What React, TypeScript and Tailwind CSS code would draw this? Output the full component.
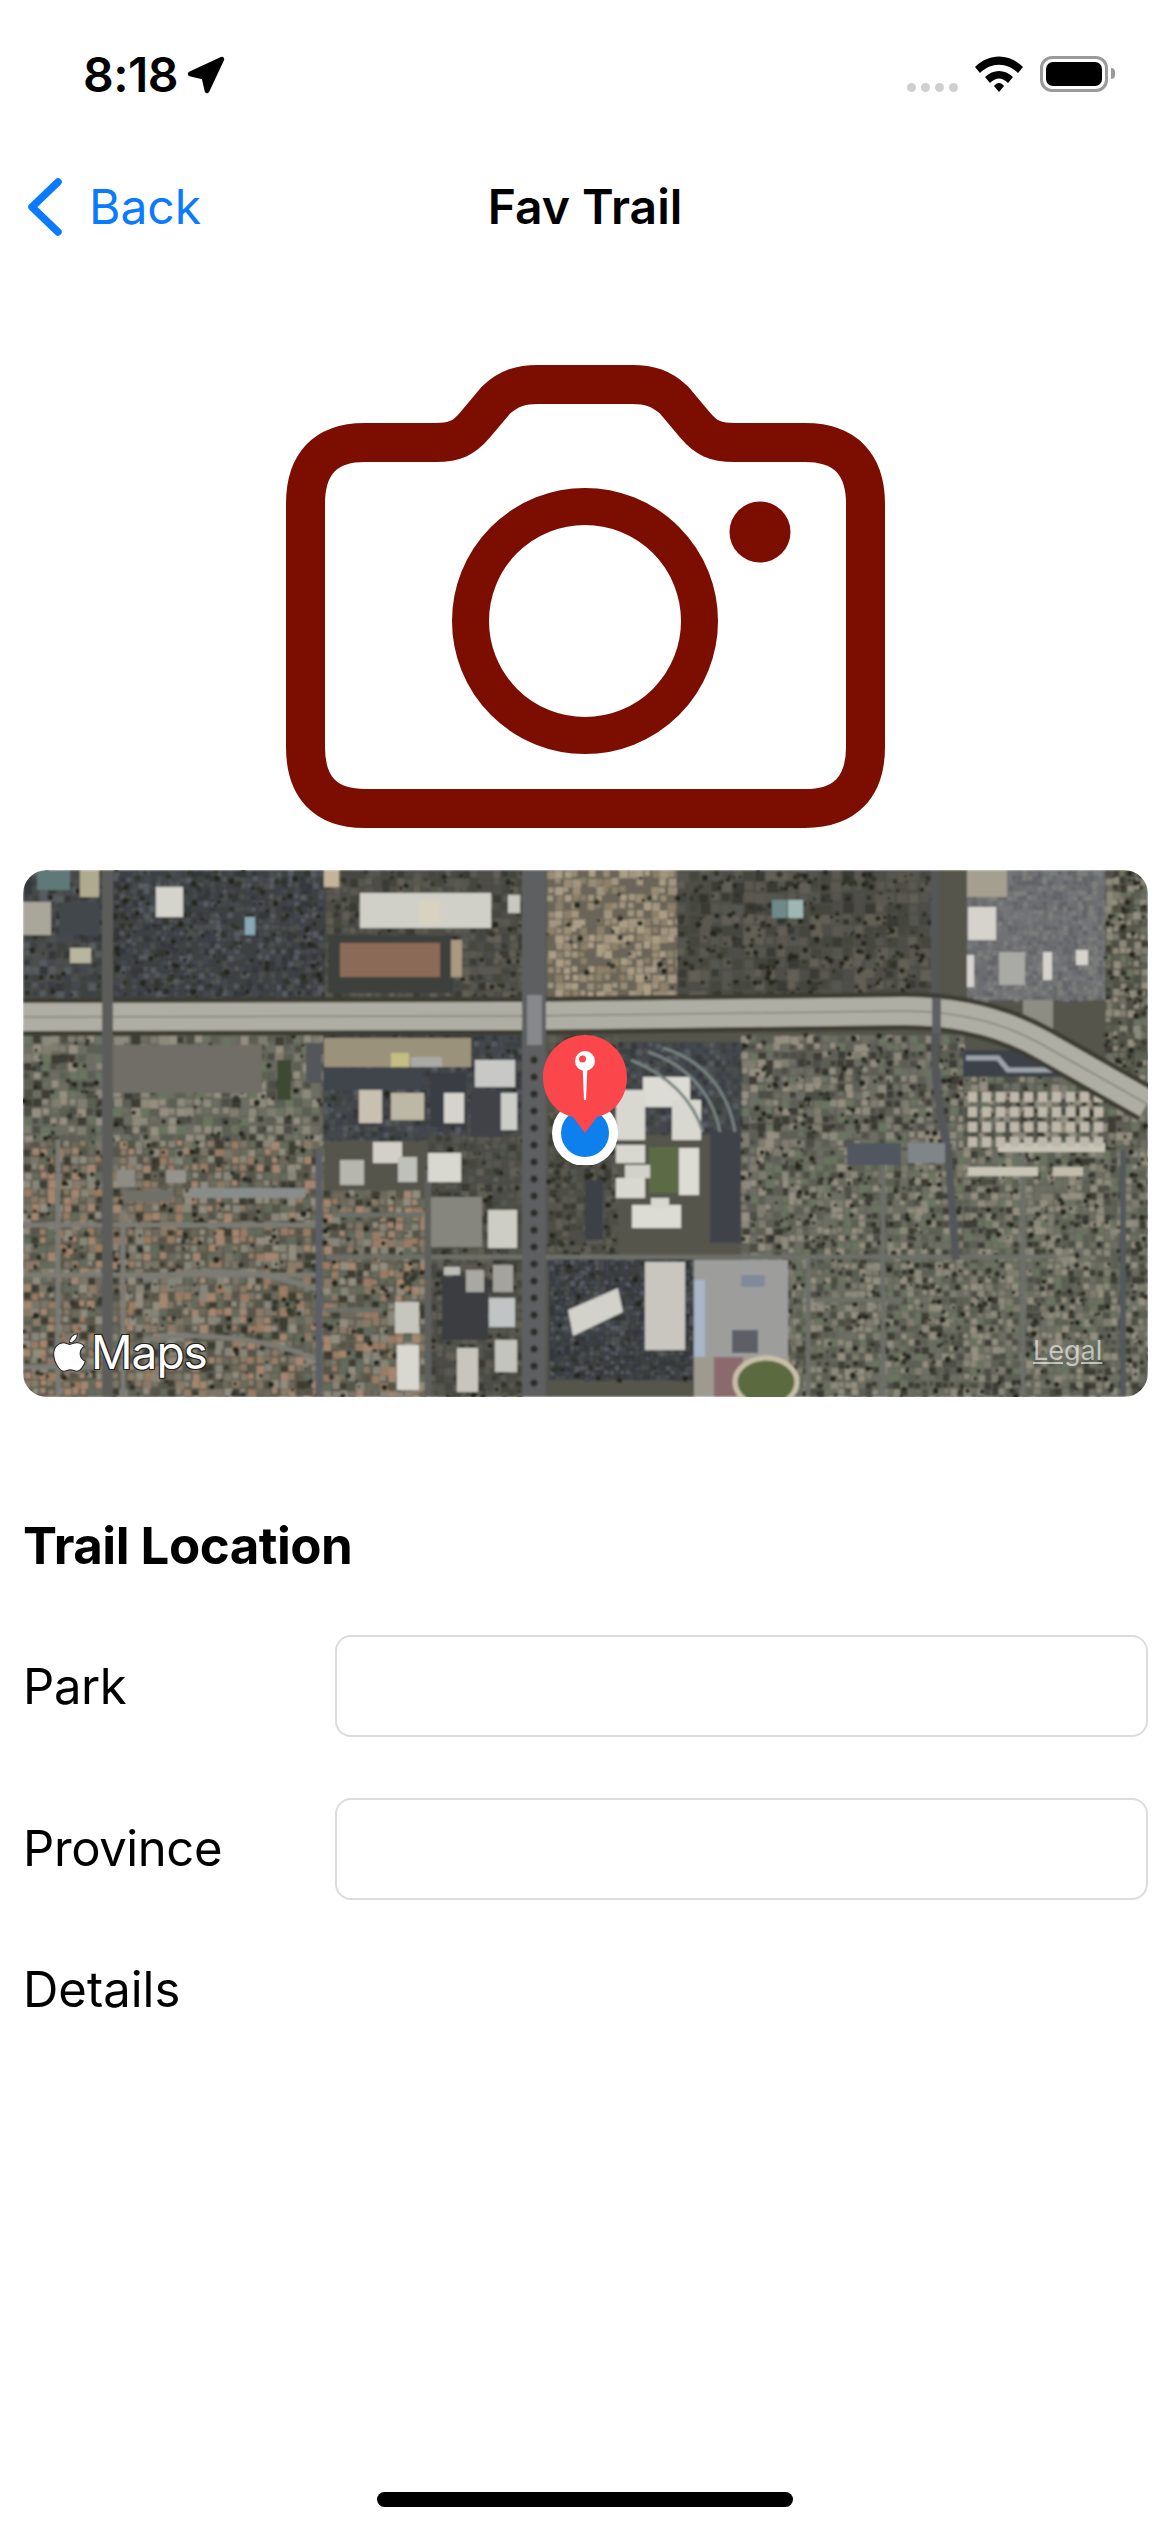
import { FaApple } from "react-icons/fa";

const font = "font-['Inter','Liberation_Sans',sans-serif]";

type Area = { x: number; y: number; w: number; h: number; cell: number; base: string; colors: string[]; trees?: number };
type Box = [number, number, number, number, string];

const warm = ["#8b7a68", "#9a7c64", "#6d6a5c", "#3c3d32", "#7b7668", "#928d7e", "#55544a", "#a58670", "#646c5c", "#888679"];
const mixed = ["#6d6e64", "#7f7d70", "#3c3e34", "#8c8a7c", "#5b5e52", "#948f80", "#4d5046", "#6b7460"];
const darkLot = ["#3e4146", "#44484e", "#34373a", "#4c504d", "#3e433f", "#565b60"];
const grayRoof = ["#5a5950", "#4f4e47", "#3a3b34", "#625f55", "#555650", "#45463e"];
const tan = ["#a39680", "#ab9e86", "#8c8069", "#998d76", "#6a6558"];

const areas: Area[] = [
  { x: 0, y: 270, w: 300, h: 257, cell: 8, base: "#5d5c50", colors: warm, trees: 300 },
  { x: 300, y: 320, w: 105, h: 207, cell: 8, base: "#5d5c50", colors: warm, trees: 320 },
  { x: 0, y: 165, w: 300, h: 105, cell: 9, base: "#66665c", colors: mixed, trees: 320 },
  { x: 0, y: 0, w: 80, h: 130, cell: 8, base: "#4a4b48", colors: darkLot, trees: 260 },
  { x: 90, y: 0, w: 212, h: 128, cell: 6, base: "#3d4044", colors: darkLot, trees: 140 },
  { x: 302, y: 0, w: 200, h: 128, cell: 8, base: "#484a46", colors: grayRoof, trees: 260 },
  { x: 524, y: 0, w: 130, h: 128, cell: 8, base: "#6b6558", colors: tan, trees: 600 },
  { x: 654, y: 0, w: 256, h: 128, cell: 11, base: "#4e4e47", colors: grayRoof, trees: 130 },
  { x: 944, y: 0, w: 138, h: 130, cell: 5, base: "#6f7072", colors: ["#75767a", "#6b6d70", "#7f807c", "#626467"] },
  { x: 1082, y: 0, w: 42, h: 215, cell: 7, base: "#565448", colors: mixed, trees: 130 },
  { x: 718, y: 165, w: 222, h: 225, cell: 8, base: "#62615a", colors: mixed, trees: 220 },
  { x: 940, y: 205, w: 184, h: 100, cell: 8, base: "#5d5d54", colors: mixed, trees: 300 },
  { x: 765, y: 280, w: 359, h: 247, cell: 7, base: "#66675c", colors: mixed, trees: 230 },
  { x: 718, y: 385, w: 50, h: 142, cell: 7, base: "#66675c", colors: mixed, trees: 260 },
  { x: 300, y: 165, w: 200, h: 105, cell: 6, base: "#42454a", colors: darkLot, trees: 260 },
  { x: 525, y: 165, w: 70, h: 230, cell: 7, base: "#4d5044", colors: grayRoof, trees: 170 },
  { x: 405, y: 265, w: 95, h: 262, cell: 8, base: "#4a4b46", colors: grayRoof, trees: 220 },
  { x: 526, y: 385, w: 143, h: 125, cell: 5, base: "#36383c", colors: darkLot, trees: 340 },
  { x: 595, y: 172, w: 123, h: 92, cell: 6, base: "#42464b", colors: darkLot },
];

// Dark lots and roofs, left to right across the picture
const boxes: Box[] = [
  [14, 0, 33, 20, "#5e7878"],
  [57, 0, 19, 27, "#b0ab90"],
  [0, 32, 28, 33, "#a9a69a"],
  [36, 32, 41, 33, "#42464c"],
  [47, 78, 21, 15, "#b8b5a0"],
  [133, 17, 27, 30, "#d4d3cc"],
  [222, 47, 10, 18, "#88a8b4"],
  [301, 0, 15, 17, "#c4b49a"],
  [337, 23, 131, 35, "#d0d0c8"],
  [395, 30, 22, 25, "#d8d2c0"],
  [485, 25, 12, 18, "#c8c8c2"],
  [305, 65, 125, 58, "#3d3f3e"],
  [317, 73, 100, 34, "#8c6a58"],
  [428, 70, 11, 37, "#a89a80"],
  [90, 175, 149, 48, "#6f6e66"],
  [283, 173, 16, 40, "#55565a"],
  [254, 190, 14, 40, "#3e4a30"],
  [301, 168, 147, 29, "#9b927b"],
  [368, 183, 18, 14, "#c4bd84"],
  [388, 187, 31, 10, "#a8a8a4"],
  [452, 190, 40, 27, "#c8c8c6"],
  [301, 198, 98, 22, "#3f444c"],
  [407, 203, 36, 54, "#3b3e44"],
  [447, 220, 33, 47, "#404346"],
  [336, 220, 23, 33, "#c8c0b0"],
  [368, 223, 33, 27, "#bdb8a5"],
  [421, 223, 20, 30, "#d5d3ca"],
  [478, 223, 16, 37, "#ccccc8"],
  [94, 300, 18, 17, "#8d8d86"],
  [143, 300, 20, 13, "#94938c"],
  [167, 318, 116, 10, "#888c8a"],
  [100, 320, 50, 12, "#6f6f68"],
  [350, 272, 29, 21, "#d2d0c8"],
  [317, 290, 24, 25, "#b6b5ae"],
  [375, 287, 19, 25, "#c0c0ba"],
  [405, 283, 33, 29, "#d8d7d0"],
  [408, 327, 51, 50, "#86867f"],
  [465, 340, 29, 38, "#cdcdc6"],
  [419, 407, 46, 63, "#3a3d41"],
  [421, 397, 16, 8, "#bcbcb8"],
  [443, 400, 18, 22, "#a9a8a2"],
  [470, 395, 20, 27, "#a4a39d"],
  [466, 428, 26, 29, "#c0c4c4"],
  [372, 432, 24, 31, "#c6c5be"],
  [374, 475, 22, 45, "#d8d7d0"],
  [434, 478, 21, 44, "#c8c6bc"],
  [472, 470, 22, 32, "#c4c4be"],
  [562, 310, 18, 60, "#3e4147"],
  [687, 260, 31, 113, "#3f4249"],
  [622, 392, 40, 88, "#c8c6bf"],
  [671, 390, 94, 97, "#9d9e9c"],
  [671, 410, 11, 80, "#a9b6c8"],
  [709, 460, 26, 23, "#5c5f66"],
  [718, 405, 24, 12, "#7f8b9a"],
  [691, 487, 29, 40, "#8b6a6e"],
  [671, 487, 20, 40, "#9e9a90"],
  [720, 487, 46, 40, "#a09a8c"],
  [626, 277, 29, 46, "#5b6b45"],
  [620, 207, 47, 30, "#dcdbd4"],
  [593, 220, 29, 50, "#d8d7d0"],
  [649, 230, 29, 40, "#d8d7d0"],
  [593, 275, 29, 18, "#d8d7d0"],
  [602, 295, 25, 13, "#d2d1ca"],
  [593, 308, 29, 20, "#d8d7d0"],
  [656, 278, 20, 47, "#dcdbd4"],
  [609, 335, 49, 23, "#dcdbd4"],
  [628, 328, 18, 10, "#d8d7d0"],
  [749, 30, 15, 18, "#6e8a88"],
  [765, 30, 15, 18, "#9fb7b2"],
  [824, 273, 54, 22, "#51565f"],
  [885, 273, 37, 20, "#80858a"],
  [944, 0, 40, 27, "#a49f8e"],
  [945, 37, 28, 33, "#d5d3cc"],
  [944, 85, 7, 32, "#d5d3cc"],
  [976, 82, 26, 33, "#a9a9a5"],
  [1020, 82, 9, 28, "#d5d3cc"],
  [1053, 80, 12, 15, "#d5d3cc"],
  [1000, 130, 30, 30, "#8d8d84"],
  [975, 273, 107, 9, "#c8c4b6"],
  [945, 297, 70, 9, "#c8c4b6"],
  [1030, 297, 30, 9, "#c0bbaa"],
  [940, 180, 98, 27, "#3e4248"],
];

function buildTexture() {
  let seed = 1337;
  const rnd = () => {
    seed = (seed * 16807) % 2147483647;
    return seed / 2147483647;
  };
  return areas.map((a, i) => {
    const cells = [];
    for (let y = a.y; y < a.y + a.h; y += a.cell) {
      for (let x = a.x; x < a.x + a.w; x += a.cell) {
        const size = a.cell * (0.6 + rnd() * 0.5);
        cells.push(
          <rect
            key={`${x}-${y}`}
            x={x + rnd() * 2}
            y={y + rnd() * 2}
            width={Math.min(size, a.x + a.w - x)}
            height={Math.min(size, a.y + a.h - y)}
            fill={a.colors[Math.floor(rnd() * a.colors.length)]}
          />
        );
      }
    }
    const trees = [];
    if (a.trees) {
      const count = Math.floor((a.w * a.h) / a.trees);
      for (let t = 0; t < count; t++) {
        trees.push(
          <circle
            key={t}
            cx={a.x + rnd() * a.w}
            cy={a.y + rnd() * a.h}
            r={1.2 + rnd() * 2}
            fill={rnd() > 0.5 ? "#25271e" : "#30342a"}
          />
        );
      }
    }
    return (
      <g key={i}>
        <rect x={a.x} y={a.y} width={a.w} height={a.h} fill={a.base} />
        {cells}
        {trees}
      </g>
    );
  });
}

const texture = buildTexture();

// small tiled roofs of the apartment blocks at the right
const flats: { x: number; y: number }[] = [];
for (let y = 222; y < 268; y += 15) {
  for (let x = 945; x < 1085; x += 14) flats.push({ x, y });
}

// street trees down the main avenue
const avenueTrees: number[] = [];
for (let y = 190; y < 527; y += 17) avenueTrees.push(y);

function Satellite() {
  return (
    <svg viewBox="0 0 1125 527" className="block h-full w-full">
      <defs>
        <filter id="soft">
          <feGaussianBlur stdDeviation="1.2" />
        </filter>
      </defs>
      <g filter="url(#soft)">
        <rect width="1125" height="527" fill="#55554c" />
        {texture}
        {/* side streets */}
        <g fill="none" stroke="#7c7c74" strokeWidth="5">
          <path d="M0 355H296M35 270V527M100 340V527M0 405H296M120 410C180 395 240 400 296 420M120 470C180 460 250 470 296 490M0 497H80" />
          <path d="M303 387H1034M310 345H400M302 440H360M860 280V527M785 390V527M1000 280V527M790 430H880" stroke="#6d6f68" />
        </g>
        <path d="M296 280V527" stroke="#5b5f66" strokeWidth="7" />
        <path d="M405 300V527" stroke="#5f605c" strokeWidth="7" />
        <path d="M912 0V180C912 220 918 250 925 280L933 390" fill="none" stroke="#54565a" strokeWidth="8" />
        <path d="M1100 280V527" stroke="#55585c" strokeWidth="6" />
        {boxes.map(([x, y, w, h, fill], i) => (
          <rect key={i} x={x} y={y} width={w} height={h} fill={fill} />
        ))}
        {/* curved car park beside the campus */}
        <g fill="none" stroke="#76817f" strokeWidth="3">
          <path d="M640 178C680 190 705 220 712 262M625 182C665 195 690 225 697 262M608 190C645 205 670 230 680 262" />
        </g>
        {/* slanted office block and chevron building */}
        <polygon points="545,440 595,418 600,442 550,466" fill="#d2d1ca" />
        <path d="M943 188H975L985 200H1030" fill="none" stroke="#9ea3aa" strokeWidth="5" />
        {flats.map((f, i) => (
          <rect key={i} x={f.x} y={f.y} width="9" height="10" fill="#bdb8aa" />
        ))}
        {/* sports track */}
        <ellipse cx="743" cy="512" rx="31" ry="24" fill="#5b6b40" stroke="#c9c0a8" strokeWidth="5" />
        {/* freeway with its tree belt */}
        <path
          d="M0 147L500 146L880 141C940 141 985 155 1020 175L1124 234"
          fill="none"
          stroke="#3e3c32"
          strokeWidth="38"
        />
        <path
          d="M0 147L500 146L880 141C940 141 985 155 1020 175L1124 234"
          fill="none"
          stroke="#afaea4"
          strokeWidth="28"
        />
        <path
          d="M0 147L500 146L880 141C940 141 985 155 1020 175L1124 234"
          fill="none"
          stroke="#85857c"
          strokeWidth="1.5"
        />
        {/* main avenues go over the freeway */}
        <rect x="79" y="0" width="11" height="527" fill="#5c5d5a" />
        <rect x="499" y="0" width="24" height="527" fill="#5d5e60" />
        <rect x="504" y="125" width="15" height="50" fill="#87888a" />
        <rect x="909" y="128" width="9" height="35" fill="#5f6064" />
        {avenueTrees.map((y) => (
          <circle key={y} cx="511" cy={y} r="3.5" fill="#2b2d28" />
        ))}
      </g>
    </svg>
  );
}

function MapPin() {
  return (
    <svg viewBox="0 0 100 130" className="absolute left-[512px] top-[165px] h-[130px] w-[100px]">
      <circle cx="50" cy="98" r="33" fill="#ffffff" />
      <circle cx="50" cy="98" r="24" fill="#0e80ee" />
      <path d="M50 98L38 82C20 78 8 62 8 42C8 19 27 0 50 0C73 0 92 19 92 42C92 62 80 78 62 82Z" fill="#fb474c" />
      <path d="M47.5 30H52.5L51 65H49Z" fill="#ffffff" />
      <circle cx="50" cy="26" r="10" fill="#ffffff" />
      <circle cx="47.5" cy="24" r="3.5" fill="#fb474c" />
    </svg>
  );
}

export default function App() {
  return (
    <div className={`flex h-[2532px] w-[1170px] flex-col bg-white text-black ${font}`}>
      {/* Status bar */}
      <div className="flex h-[150px] items-start justify-between pt-[46px]">
        <div className="flex items-center gap-[9px] pl-[83px]">
          <span className="text-[48px] leading-[58px] font-semibold tracking-[-0.5px]">8:18</span>
          <svg viewBox="0 0 36 36" className="h-[38px] w-[38px]">
            <path d="M3 17L33 3L19 33L16 20Z" fill="#000000" stroke="#000000" strokeWidth="4.5" strokeLinejoin="round" />
          </svg>
        </div>
        <div className="flex items-start pr-[55px] pt-[10px]">
          <div className="mt-[27px] flex gap-[5px]">
            <span className="h-[9px] w-[9px] rounded-full bg-[#cfcfcf]" />
            <span className="h-[9px] w-[9px] rounded-full bg-[#cfcfcf]" />
            <span className="h-[9px] w-[9px] rounded-full bg-[#cfcfcf]" />
            <span className="h-[9px] w-[9px] rounded-full bg-[#cfcfcf]" />
          </div>
          <svg viewBox="0 0 48 36" className="ml-[17px] h-[36px] w-[48px]">
            <path d="M0 11C14 -3 34 -3 48 11L43 17C32 6 16 6 5 17Z" fill="#000000" />
            <path d="M10 21C18 13 30 13 38 21L33 27C27 21 21 21 15 27Z" fill="#000000" />
            <path d="M19 30C22 26 26 26 29 30L24 36Z" fill="#000000" />
          </svg>
          <div className="ml-[17px] flex h-[36px] w-[68px] items-center rounded-[12px] border-[3px] border-[#9a9a9a] p-[3px]">
            <div className="h-full w-full rounded-[7px] bg-black" />
          </div>
          <div className="ml-[3px] mt-[12px] h-[11px] w-[4px] rounded-r-full bg-[#9a9a9a]" />
        </div>
      </div>

      {/* Nav bar */}
      <div className="grid h-[114px] grid-cols-[1fr_auto_1fr] items-center">
        <div className="flex items-center gap-[26px] pl-[26px]">
          <svg viewBox="0 0 37 60" className="h-[60px] w-[37px]">
            <path d="M32 5L6 30L32 55" fill="none" stroke="#0a7aff" strokeWidth="7.5" strokeLinecap="round" strokeLinejoin="round" />
          </svg>
          <span className="text-[48px] leading-[60px] text-[#0a7aff]">Back</span>
        </div>
        <span className="text-[48px] leading-[60px] font-semibold">Fav Trail</span>
        <div />
      </div>

      {/* Camera */}
      <div className="mt-[101px] flex justify-center">
        <svg viewBox="286 365 600 463" className="h-[463px] w-[600px]">
          <g fill="none" stroke="#7b0e00" strokeWidth="39">
            <path d="M366 442.5H436C456 442.5 465 438 476 425L497 400C510 388 522 384.5 539 384.5H633C650 384.5 662 388 675 400L696 425C707 438 716 442.5 736 442.5H806C846 442.5 866.5 464 866.5 504V747C866.5 787 846 808.5 806 808.5H366C326 808.5 306.5 787 306.5 747V504C306.5 464 326 442.5 366 442.5Z" />
            <circle cx="586" cy="621" r="114.5" strokeWidth="37" />
          </g>
          <circle cx="761" cy="532" r="30.5" fill="#7b0e00" />
        </svg>
      </div>

      {/* Map */}
      <div className="relative ml-[23px] mr-[22px] mt-[42px] h-[527px] overflow-hidden rounded-[24px]">
        <Satellite />
        <MapPin />
        <div className="absolute left-[25px] top-[456px] flex items-center">
          <FaApple size={43} color="#ffffff" stroke="#222222" strokeWidth={12} />
          <span className="text-[46px] leading-[52px] tracking-[-1px] text-white [text-shadow:-1px_-1px_0_#222,1px_-1px_0_#222,-1px_1px_0_#222,1px_1px_0_#222]">
            Maps
          </span>
        </div>
        <span className="absolute left-[1010px] top-[465px] text-[27px] leading-[32px] text-white/60 underline">
          Legal
        </span>
      </div>

      {/* Form */}
      <div className="mt-[121px] flex flex-col pl-[23px] pr-[22px]">
        <h2 className="text-[51px] leading-[56px] font-bold tracking-[-0.5px]">Trail Location</h2>
        <div className="mt-[61px] flex items-center">
          <label className="relative top-[1px] w-[312px] text-[49px] leading-[60px] tracking-[-0.4px]">Park</label>
          <input readOnly className="h-[102px] flex-1 rounded-[16px] border-2 border-[#dcdcdc]" />
        </div>
        <div className="mt-[61px] flex items-center">
          <label className="w-[312px] text-[49px] leading-[60px] tracking-[-0.4px]">Province</label>
          <input readOnly className="h-[102px] flex-1 rounded-[16px] border-2 border-[#dcdcdc]" />
        </div>
        <div className="mt-[60px] text-[49px] leading-[60px]">Details</div>
      </div>

      {/* Home indicator */}
      <div className="mt-auto mb-[25px] h-[15px] w-[416px] self-center rounded-full bg-black" />
    </div>
  );
}
